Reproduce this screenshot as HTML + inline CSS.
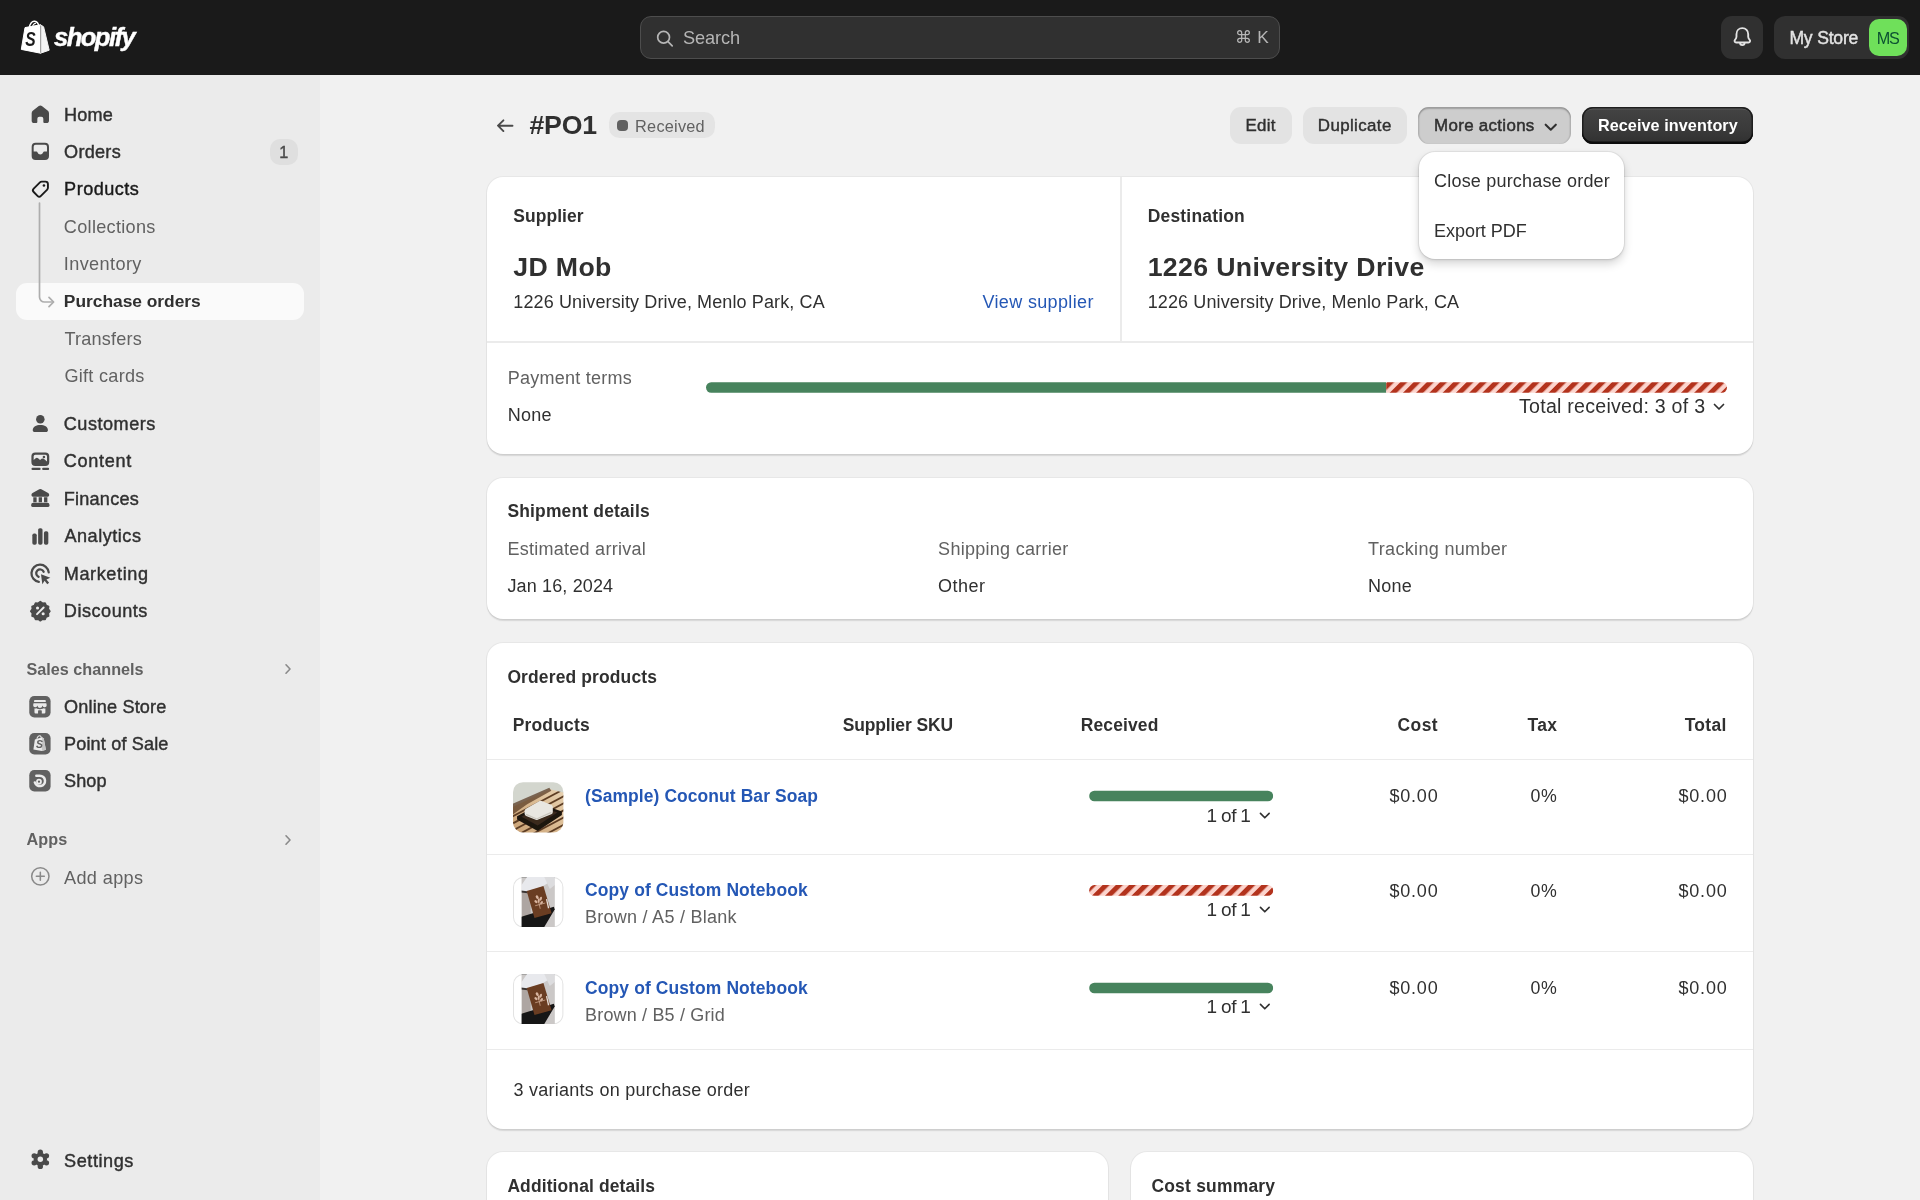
<!DOCTYPE html>
<html lang="en">
<head>
<meta charset="utf-8">
<title>Purchase order #PO1</title>
<style>
*{box-sizing:border-box;margin:0;padding:0}
html,body{width:1920px;height:1200px;overflow:hidden}
body{font-family:"Liberation Sans",Arial,sans-serif;background:#f1f1f1;color:#303030;font-size:18px;position:relative}
#wrap{position:absolute;left:0;top:0;width:1920px;height:1200px;overflow:hidden;will-change:transform;background:#f1f1f1}
.abs{position:absolute}
.t{position:absolute;white-space:nowrap;line-height:1}
.md{-webkit-text-stroke:.42px currentColor}
.b{font-weight:700}
.sub{color:#616161}
.lk{color:#2457b5}
#top{position:absolute;z-index:5;left:0;top:0;width:1920px;height:74.5px;background:#1a1a1a}
#side{position:absolute;left:0;top:0;width:320px;height:1200px;background:#ebebeb}
.card{position:absolute;background:#fff;border-radius:16px;box-shadow:0 0 0 1px rgba(0,0,0,.04),0 1.6px 1.2px 0 rgba(0,0,0,.11)}
.hr{position:absolute;background:#ebebeb}
.bar{position:absolute;height:9.9px;border-radius:6px}
.g{background:#47835d}
.rs{background:repeating-linear-gradient(135deg,#b3331d 0 5.05px,#fcd4cd 5.05px 9.385px)}
</style>
</head>
<body>
<div id="wrap">
<div id="top">
<svg class="abs" style="left:20px;top:20px" width="31" height="35" viewBox="0 0 31 35"><path d="M5 7.6 L20.5 4.8 L20.5 33.2 L1.3 29.4 Z" fill="#fff" stroke="#fff" stroke-width="1" stroke-linejoin="round"/><path d="M20.5 4.8 L23.6 6.8 L29.2 30.2 L20.5 33.2 Z" fill="#f4f4f4" stroke="#f4f4f4" stroke-width="1" stroke-linejoin="round"/><path d="M20.7 5.5 V32.8" stroke="#8f8f8f" stroke-width="1"/><path d="M9.3 8 C9.6 4 12 .9 14.6 1.3 C17.2 1.7 18.6 4.2 18.8 6.5" fill="none" stroke="#fff" stroke-width="1.4"/><path d="M12.3 7.5 C12.9 4.7 14.6 2.9 16 3.5" fill="none" stroke="#fff" stroke-width="1.1"/><text transform="translate(5.2 26.2) scale(.8 1)" font-family="Liberation Sans, Arial, sans-serif" font-weight="700" font-style="italic" font-size="19.5" fill="#1a1a1a">S</text></svg>
<div class="t b" style="left:54px;top:25.2px;font-size:25.6px;font-style:italic;color:#fff;letter-spacing:-1.55px;-webkit-text-stroke:.45px #fff">shopify</div>
<div class="abs" style="left:640px;top:16px;width:640px;height:42.7px;background:#303030;border:1px solid #4d4d4d;border-radius:11px"></div>
<svg class="abs" style="left:654px;top:27.5px" width="22" height="22" viewBox="0 0 22 22" fill="none" stroke="#b5b5b5" stroke-width="1.7" stroke-linecap="round"><circle cx="9.6" cy="9.3" r="5.9"/><path d="M14 13.7 L18.2 17.9"/></svg>
<div class="t" style="left:683.1px;top:28.92px;font-size:18.2px;letter-spacing:-.13px;color:#b5b5b5">Search</div>
<div class="t" style="left:1235.4px;top:29.36px;font-size:17.3px;color:#b5b5b5">⌘ K</div>
<div class="abs" style="left:1721px;top:16.2px;width:42px;height:42.5px;background:#303030;border-radius:11px"></div>
<svg class="abs" style="left:1728.7px;top:24.2px" width="26.67" height="26.67" viewBox="0 0 20 20" fill="none" stroke="#e3e3e3" stroke-width="1.4" stroke-linejoin="round"><path d="M10 3.1c-2.6 0-4.4 2-4.4 4.5v1.9c0 .9-.5 1.7-1.1 2.4-.7.8-.2 2 .9 2h9.2c1.1 0 1.6-1.2.9-2-.6-.7-1.1-1.5-1.1-2.4v-1.9c0-2.5-1.8-4.5-4.4-4.5Z"/><path d="M8.3 14.1a1.7 1.7 0 0 0 3.4 0"/></svg>
<div class="abs" style="left:1774.4px;top:16.2px;width:134.4px;height:42.5px;background:#303030;border-radius:11px"></div>
<div class="t md" style="left:1789.4px;top:29.71px;font-size:17.6px;letter-spacing:-.2px;color:#e3e3e3">My Store</div>
<div class="abs" style="left:1869px;top:18.7px;width:38px;height:37.5px;background:#6fe05a;border-radius:10px"></div>
<div class="t" style="left:1876.7px;top:30.09px;font-size:16.2px;letter-spacing:-1.2px;color:#0c5132">MS</div>
</div>
<div id="side">
<div class="abs" style="left:16px;top:283px;width:288px;height:37.3px;background:#fafafa;border-radius:11px"></div>
<svg class="abs" style="left:30px;top:200px" width="30" height="112" viewBox="0 0 30 112" fill="none" stroke="#adadad" stroke-width="1.7" stroke-linecap="round" stroke-linejoin="round"><path d="M9.5 3 V97 a5 5 0 0 0 5 5 H23.3"/><path d="M19 97.3 l4.6 4.7 -4.6 4.7"/></svg>
<svg class="abs" style="left:26.67px;top:100.66px" width="26.67" height="26.67" viewBox="0 0 20 20" fill="#4a4a4a"><path d="M10 3.3c.42 0 .83.14 1.16.41l4.5 3.65c.53.43.84 1.08.84 1.76v5.63c0 .97-.78 1.75-1.75 1.75h-1.75a.75.75 0 0 1-.75-.75v-2.5a1.5 1.5 0 0 0-1.5-1.5h-1.5a1.5 1.5 0 0 0-1.5 1.5v2.5a.75.75 0 0 1-.75.75h-1.75c-.97 0-1.75-.78-1.75-1.75v-5.63c0-.68.31-1.33.84-1.76l4.5-3.65c.33-.27.74-.41 1.16-.41Z"/></svg>
<div class="t md" style="left:64.1px;top:106.07px;font-size:18.1px;letter-spacing:.17px;color:#303030">Home</div>
<svg class="abs" style="left:26.67px;top:138.06px" width="26.67" height="26.67" viewBox="0 0 20 20" fill="#4a4a4a"><path fill-rule="evenodd" d="M6.5 3.5h7a3 3 0 0 1 3 3v7a3 3 0 0 1-3 3h-7a3 3 0 0 1-3-3v-7a3 3 0 0 1 3-3Zm-1.5 3v3.7h2.05c.4 0 .74.26.87.64a2.2 2.2 0 0 0 4.16 0c.13-.38.47-.64.87-.64h2.05v-3.7a1.5 1.5 0 0 0-1.5-1.5h-7a1.5 1.5 0 0 0-1.5 1.5Z"/></svg>
<div class="t md" style="left:64.1px;top:143.47px;font-size:18.1px;letter-spacing:.26px;color:#303030">Orders</div>
<div class="abs" style="left:270px;top:138.7px;width:28.3px;height:26.3px;background:#dfdfdf;border-radius:10px"></div>
<div class="t md" style="left:279.2px;top:144.49px;font-size:16.2px;color:#4a4a4a">1</div>
<svg class="abs" style="left:26.67px;top:175.47px" width="26.67" height="26.67" viewBox="0 0 20 20" fill="#4a4a4a"><g transform="translate(.75 1.5) scale(.92)"><path d="M11.15 3.75h3.1a2 2 0 0 1 2 2v3.1a2 2 0 0 1-.59 1.41l-5.1 5.1a2 2 0 0 1-2.82 0l-3.1-3.1a2 2 0 0 1 0-2.82l5.1-5.1a2 2 0 0 1 1.41-.59Z" fill="none" stroke="#1a1a1a" stroke-width="1.55" stroke-linejoin="round"/><circle cx="13" cy="7" r="1.05" fill="#1a1a1a"/></g></svg>
<div class="t md" style="left:64.1px;top:180.27px;font-size:18.1px;letter-spacing:.48px;color:#1a1a1a">Products</div>
<div class="t" style="left:63.8px;top:218.27px;font-size:18.1px;letter-spacing:.31px;color:#616161">Collections</div>
<div class="t" style="left:63.8px;top:254.77px;font-size:18.1px;letter-spacing:.39px;color:#616161">Inventory</div>
<div class="t b" style="left:63.8px;top:293.31px;font-size:17.4px;letter-spacing:-.02px;color:#303030">Purchase orders</div>
<div class="t" style="left:64.4px;top:330.27px;font-size:18.1px;letter-spacing:.2px;color:#616161">Transfers</div>
<div class="t" style="left:64.4px;top:366.77px;font-size:18.1px;letter-spacing:.28px;color:#616161">Gift cards</div>
<svg class="abs" style="left:26.67px;top:409.97px" width="26.67" height="26.67" viewBox="0 0 20 20" fill="#4a4a4a"><circle cx="10" cy="6.9" r="3.2"/><path d="M4.3 15.1c0-2.5 2.6-3.9 5.7-3.9s5.7 1.4 5.7 3.9c0 .8-.65 1.4-1.45 1.4h-8.5c-.8 0-1.45-.6-1.45-1.4Z"/></svg>
<div class="t md" style="left:63.8px;top:415.37px;font-size:18.1px;letter-spacing:.51px;color:#303030">Customers</div>
<svg class="abs" style="left:26.67px;top:447.37px" width="26.67" height="26.67" viewBox="0 0 20 20" fill="#4a4a4a"><g transform="translate(0 .9)"><path fill-rule="evenodd" d="M6.2 3.2h7.6a2.9 2.9 0 0 1 2.9 2.9v4.3a2.9 2.9 0 0 1-2.9 2.9h-7.6a2.9 2.9 0 0 1-2.9-2.9v-4.3a2.9 2.9 0 0 1 2.9-2.9Zm0 1.7a1.2 1.2 0 0 0-1.2 1.2v2.7l1.5-1.3a1.4 1.4 0 0 1 1.8 0l1.5 1.3 1.1-.8a1.4 1.4 0 0 1 1.7 0l2.4 1.9v-3.8a1.2 1.2 0 0 0-1.2-1.2h-7.6Zm6.5 2.7a.95.95 0 1 0 0-1.9.95.95 0 0 0 0 1.9Z"/><path d="M4.2 14.7h5.2a.85.85 0 0 1 0 1.7h-5.2a.85.85 0 0 1 0-1.7Zm8 0h3.6a.85.85 0 0 1 0 1.7h-3.6a.85.85 0 0 1 0-1.7Z"/></g></svg>
<div class="t md" style="left:63.8px;top:452.17px;font-size:18.1px;letter-spacing:.7px;color:#303030">Content</div>
<svg class="abs" style="left:26.67px;top:484.67px" width="26.67" height="26.67" viewBox="0 0 20 20" fill="#4a4a4a"><g transform="translate(.4 .3) scale(.96)"><path d="M9.2 3.1a1.7 1.7 0 0 1 1.6 0l5.3 2.8c.5.25.8.75.8 1.3v.5c0 .6-.5 1.1-1.1 1.1h-11.6c-.6 0-1.1-.5-1.1-1.1v-.5c0-.55.3-1.05.8-1.3l5.3-2.8Z"/><path d="M4.5 9.3h2.6v3.9h-2.6zM8.7 9.3h2.6v3.9h-2.6zM12.9 9.3h2.6v3.9h-2.6z"/><path d="M4.6 13.5h10.8a1.8 1.8 0 0 1 1.8 1.8v.4a1.1 1.1 0 0 1-1.1 1.1h-12.2a1.1 1.1 0 0 1-1.1-1.1v-.4a1.8 1.8 0 0 1 1.8-1.8Z"/></g></svg>
<div class="t md" style="left:63.8px;top:490.07px;font-size:18.1px;letter-spacing:.22px;color:#303030">Finances</div>
<svg class="abs" style="left:26.67px;top:521.96px" width="26.67" height="26.67" viewBox="0 0 20 20" fill="#4a4a4a"><g transform="translate(0 .7)"><rect x="4" y="8" width="3.3" height="8.3" rx="1.3"/><rect x="8.35" y="3.9" width="3.3" height="12.4" rx="1.3"/><rect x="12.7" y="6.2" width="3.3" height="10.1" rx="1.3"/></g></svg>
<div class="t md" style="left:64.4px;top:527.37px;font-size:18.1px;letter-spacing:.52px;color:#303030">Analytics</div>
<svg class="abs" style="left:26.67px;top:559.37px" width="26.67" height="26.67" viewBox="0 0 20 20" fill="#4a4a4a"><g transform="translate(.2 1.3)"><g fill="none" stroke="#4a4a4a" stroke-width="1.7" stroke-linecap="round"><path d="M16.1 8.7a6.5 6.5 0 1 0-7.4 7.2"/><path d="M12.3 8.3a2.9 2.9 0 1 0-3.8 3.8"/></g><path d="M10.3 10.1l7 2.6-2.9 1.3 2 2.5-1.4 1.1-2-2.5-1.7 2.5Z"/></g></svg>
<div class="t md" style="left:63.8px;top:564.77px;font-size:18.1px;letter-spacing:.59px;color:#303030">Marketing</div>
<svg class="abs" style="left:26.67px;top:596.66px" width="26.67" height="26.67" viewBox="0 0 20 20" fill="#4a4a4a"><g transform="translate(.8 1.2) scale(.92)"><path d="M10 2.5l1.75 1.3 2.15-.25.85 2 2 .85-.25 2.15 1.3 1.75-1.3 1.75.25 2.15-2 .85-.85 2-2.15-.25-1.75 1.3-1.75-1.3-2.15.25-.85-2-2-.85.25-2.15-1.3-1.75 1.3-1.75-.25-2.15 2-.85.85-2 2.15.25Z" stroke="#4a4a4a" stroke-width="1.3" stroke-linejoin="round"/><circle cx="7.7" cy="7.7" r="1.25" fill="#ebebeb"/><circle cx="12.3" cy="12.3" r="1.25" fill="#ebebeb"/><path d="M7.3 12.7l5.4-5.4" stroke="#ebebeb" stroke-width="1.6" stroke-linecap="round"/></g></svg>
<div class="t md" style="left:63.8px;top:602.07px;font-size:18.1px;letter-spacing:.52px;color:#303030">Discounts</div>
<div class="t b" style="left:26.4px;top:660.99px;font-size:16.2px;letter-spacing:.02px;color:#616161">Sales channels</div>
<svg class="abs" style="left:281px;top:661px" width="14" height="16" viewBox="0 0 14 16" fill="none" stroke="#8a8a8a" stroke-width="1.6" stroke-linecap="round" stroke-linejoin="round"><path d="M5 3.8l4 4.2-4 4.2"/></svg>
<svg class="abs" style="left:26.67px;top:692.66px" width="26.67" height="26.67" viewBox="0 0 20 20" fill="#4a4a4a"><g transform="translate(-.3 .3)"><rect x="2" y="2" width="16" height="16" rx="3.8" fill="#616161"/><g fill="#ebebeb"><path d="M6.2 5h7.6a.6.6 0 0 1 .6.6v.9h-8.8v-.9a.6.6 0 0 1 .6-.6Z"/><path d="M5.2 7.3h9.6l.3 1.5a1.65 1.65 0 0 1-3.25.3 1.85 1.85 0 0 1-3.7 0 1.65 1.65 0 0 1-3.25-.3Z"/><path fill-rule="evenodd" d="M5.9 11.3c.5.15 1.05.1 1.5-.1.4.35 1 .55 1.6.45.35.15.7.2 1 .2s.65-.05 1-.2c.6.1 1.2-.1 1.6-.45.45.2 1 .25 1.5.1v2.9a.9.9 0 0 1-.9.9h-6.4a.9.9 0 0 1-.9-.9Zm2.7 1.9v1.9h2.8v-1.9a.5.5 0 0 0-.5-.5h-1.8a.5.5 0 0 0-.5.5Z"/></g></g></svg>
<div class="t md" style="left:64px;top:698.07px;font-size:18.1px;letter-spacing:.16px;color:#303030">Online Store</div>
<svg class="abs" style="left:26.67px;top:729.96px" width="26.67" height="26.67" viewBox="0 0 20 20" fill="#4a4a4a"><g transform="translate(-.3 .3)"><rect x="2" y="2" width="16" height="16" rx="3.8" fill="#616161"/><path d="M6.2 6.9l5.6-1.7 1.1.9 1.6 8.5-3.1.9-6.3-1.1Z" fill="#ebebeb"/><path d="M11.8 5.2l1.1.9 1.6 8.5-3.1.9Z" fill="#c4c4c4"/><path d="M7.7 6.3c.3-1.7 1.5-2.5 2.4-2.2.7.25.95 1.1 1 1.9" fill="none" stroke="#ebebeb" stroke-width=".8"/><text x="7.05" y="13.4" font-family="Liberation Sans, Arial, sans-serif" font-weight="700" font-style="italic" font-size="7.8" fill="#616161">S</text></g></svg>
<div class="t md" style="left:64px;top:735.37px;font-size:18.1px;letter-spacing:.15px;color:#303030">Point of Sale</div>
<svg class="abs" style="left:26.67px;top:766.96px" width="26.67" height="26.67" viewBox="0 0 20 20" fill="#4a4a4a"><g transform="translate(-.3 .3)"><rect x="2" y="2" width="16" height="16" rx="3.8" fill="#616161"/><path d="M7.3 6.2h2.6a3.9 3.9 0 1 1-3.7 5.1" fill="none" stroke="#ebebeb" stroke-width="1.9" stroke-linecap="round"/><circle cx="9.3" cy="10.7" r="1.5" fill="none" stroke="#ebebeb" stroke-width="1.3"/></g></svg>
<div class="t md" style="left:64px;top:772.37px;font-size:18.1px;letter-spacing:.11px;color:#303030">Shop</div>
<div class="t b" style="left:26.4px;top:831.29px;font-size:16.2px;letter-spacing:.17px;color:#616161">Apps</div>
<svg class="abs" style="left:281px;top:831.5px" width="14" height="16" viewBox="0 0 14 16" fill="none" stroke="#8a8a8a" stroke-width="1.6" stroke-linecap="round" stroke-linejoin="round"><path d="M5 3.8l4 4.2-4 4.2"/></svg>
<svg class="abs" style="left:26.67px;top:863.46px" width="26.67" height="26.67" viewBox="0 0 20 20" fill="#4a4a4a"><g fill="none" stroke="#8a8a8a" stroke-width="1.15" stroke-linecap="round"><circle cx="10" cy="10" r="6.5"/><path d="M10 7v6M7 10h6"/></g></svg>
<div class="t" style="left:64px;top:868.77px;font-size:18.1px;letter-spacing:.37px;color:#616161">Add apps</div>
<svg class="abs" style="left:26.67px;top:1146.37px" width="26.67" height="26.67" viewBox="0 0 20 20" fill="#4a4a4a"><circle cx="10" cy="10" r="5"/><circle cx="10" cy="4.7" r="2"/><circle cx="10" cy="15.3" r="2"/><circle cx="5.4" cy="7.35" r="2"/><circle cx="14.6" cy="7.35" r="2"/><circle cx="5.4" cy="12.65" r="2"/><circle cx="14.6" cy="12.65" r="2"/><circle cx="10" cy="10" r="2.05" fill="#ebebeb"/></svg>
<div class="t md" style="left:64.1px;top:1151.77px;font-size:18.1px;letter-spacing:.56px;color:#303030">Settings</div>
</div>
<div id="main">
<svg class="abs" style="left:494px;top:114.5px" width="22" height="22" viewBox="0 0 22 22" fill="none" stroke="#4a4a4a" stroke-width="1.9" stroke-linecap="round" stroke-linejoin="round"><path d="M18.5 10.7 H4.2 M9.4 5.3 L4 10.7 L9.4 16.1"/></svg>
<div class="t b" style="left:529.4px;top:111.89px;font-size:26.67px;letter-spacing:-.17px;color:#303030">#PO1</div>
<div class="abs" style="left:609px;top:112px;width:106px;height:26.4px;background:#e4e4e4;border-radius:10.5px"></div>
<div class="abs" style="left:617px;top:120px;width:11px;height:11px;background:#616161;border-radius:4px"></div>
<div class="t" style="left:635.1px;top:117.65px;font-size:16.3px;letter-spacing:.24px;color:#616161">Received</div>
<div class="abs" style="left:1229.6px;top:106.7px;width:62.4px;height:37.1px;background:#e3e3e3;border-radius:11px"></div>
<div class="t md" style="left:1245.4px;top:117.85px;font-size:16.9px;letter-spacing:.29px;color:#303030">Edit</div>
<div class="abs" style="left:1302.7px;top:106.7px;width:104.6px;height:37.1px;background:#e3e3e3;border-radius:11px"></div>
<div class="t md" style="left:1317.8px;top:117.85px;font-size:16.9px;letter-spacing:.39px;color:#303030">Duplicate</div>
<div class="abs" style="left:1418px;top:106.7px;width:153px;height:37.1px;background:#cdcdcd;border-radius:11px;box-shadow:inset 0 2px 1.5px rgba(0,0,0,.22),inset 1.5px 0 1px rgba(0,0,0,.1),inset -1.5px 0 1px rgba(0,0,0,.1)"></div>
<div class="t md" style="left:1434.1px;top:118.35px;font-size:16.9px;letter-spacing:.32px;color:#303030;-webkit-text-stroke:.5px currentColor">More actions</div>
<svg class="abs" style="left:1543.5px;top:122.7px" width="13.5" height="9" viewBox="0 0 12 8" fill="none" stroke="#303030" stroke-width="1.8" stroke-linecap="round" stroke-linejoin="round"><path d="M1.5 1.5 L6 6 L10.5 1.5"/></svg>
<div class="abs" style="left:1582px;top:106.7px;width:171.1px;height:37.1px;background:linear-gradient(180deg,#444 0%,#3a3a3a 60%,#303030 100%);border-radius:11px;box-shadow:inset 0 -2.5px 0 0 #0c0c0c,inset 0 0 0 1.5px #1f1f1f,inset 0 2.5px 0 0 rgba(255,255,255,.13)"></div>
<div class="t b" style="left:1597.9px;top:116.79px;font-size:16.2px;letter-spacing:.08px;color:#fff">Receive inventory</div>
<div class="card" style="left:487.2px;top:177px;width:1265.6px;height:276.7px"></div>
<div class="hr" style="left:1120.2px;top:177px;width:1.4px;height:164.5px"></div>
<div class="hr" style="left:487.2px;top:341.3px;width:1265.6px;height:1.4px"></div>
<div class="t b" style="left:513.3px;top:208.08px;font-size:17.45px;letter-spacing:.07px">Supplier</div>
<div class="t b" style="left:513.3px;top:253.59px;font-size:26.67px;letter-spacing:.36px">JD Mob</div>
<div class="t" style="left:513.3px;top:293.12px;font-size:18px;letter-spacing:.12px">1226 University Drive, Menlo Park, CA</div>
<div class="t" style="left:982.4px;top:292.82px;font-size:18px;letter-spacing:.36px;color:#2457b5">View supplier</div>
<div class="t b" style="left:1147.7px;top:208.08px;font-size:17.45px;letter-spacing:.21px">Destination</div>
<div class="t b" style="left:1147.7px;top:253.59px;font-size:26.67px;letter-spacing:.35px">1226 University Drive</div>
<div class="t" style="left:1147.7px;top:293.12px;font-size:18px;letter-spacing:.12px">1226 University Drive, Menlo Park, CA</div>
<div class="t" style="left:507.8px;top:368.72px;font-size:18px;letter-spacing:.24px;color:#616161">Payment terms</div>
<div class="t" style="left:507.8px;top:406.02px;font-size:18px;letter-spacing:.19px">None</div>
<svg class="abs" style="left:705px;top:381px" width="1023" height="13" viewBox="0 0 1023 13"><defs><clipPath id="bc1"><rect x="1" y="1.3" width="1021" height="10.35" rx="5.17"/></clipPath><pattern id="bp1" width="9.36" height="8" patternUnits="userSpaceOnUse" patternTransform="translate(8.17 0) rotate(45)"><rect width="9.36" height="8" fill="#fcd4cd"/><rect width="5" height="8" fill="#b3331d"/></pattern></defs><g clip-path="url(#bc1)"><rect x="1" y="0" width="680.25" height="13" fill="#47835d"/><rect x="681.25" y="0" width="340.75" height="13" fill="url(#bp1)"/></g></svg>
<div class="t" style="left:1519px;top:397.34px;font-size:19.6px;letter-spacing:.25px">Total received: 3 of 3</div>
<svg class="abs" style="left:1712.6px;top:403.1px" width="12" height="8" viewBox="0 0 12 8" fill="none" stroke="#303030" stroke-width="1.7" stroke-linecap="round" stroke-linejoin="round"><path d="M1.5 1.5 L6 6 L10.5 1.5"/></svg>
<div class="card" style="left:487.2px;top:478px;width:1265.6px;height:141.2px"></div>
<div class="t b" style="left:507.4px;top:502.98px;font-size:17.45px;letter-spacing:.18px">Shipment details</div>
<div class="t" style="left:507.4px;top:540.22px;font-size:18px;letter-spacing:.27px;color:#616161">Estimated arrival</div>
<div class="t" style="left:507.4px;top:577.42px;font-size:18px;letter-spacing:.15px">Jan 16, 2024</div>
<div class="t" style="left:938.1px;top:540.22px;font-size:18px;letter-spacing:.28px;color:#616161">Shipping carrier</div>
<div class="t" style="left:938.1px;top:577.42px;font-size:18px;letter-spacing:.5px">Other</div>
<div class="t" style="left:1368.1px;top:540.22px;font-size:18px;letter-spacing:.33px;color:#616161">Tracking number</div>
<div class="t" style="left:1368.1px;top:577.42px;font-size:18px;letter-spacing:.19px">None</div>
<div class="card" style="left:487.2px;top:643.3px;width:1265.6px;height:485.5px"></div>
<div class="t b" style="left:507.4px;top:669.18px;font-size:17.45px;letter-spacing:.15px">Ordered products</div>
<div class="t b" style="left:512.7px;top:717.18px;font-size:17.45px;letter-spacing:.2px">Products</div>
<div class="t b" style="left:842.7px;top:717.18px;font-size:17.45px;letter-spacing:-.1px">Supplier SKU</div>
<div class="t b" style="left:1080.7px;top:717.18px;font-size:17.45px;letter-spacing:.15px">Received</div>
<div class="t b" style="left:1397.4px;top:717.18px;font-size:17.45px;letter-spacing:.51px">Cost</div>
<div class="t b" style="left:1527.4px;top:717.18px;font-size:17.45px;letter-spacing:.46px">Tax</div>
<div class="t b" style="left:1684.7px;top:717.18px;font-size:17.45px;letter-spacing:.33px">Total</div>
<div class="hr" style="left:487.2px;top:758.6px;width:1265.6px;height:1.4px"></div>
<div class="hr" style="left:487.2px;top:853.6px;width:1265.6px;height:1.4px"></div>
<div class="hr" style="left:487.2px;top:951px;width:1265.6px;height:1.4px"></div>
<div class="hr" style="left:487.2px;top:1048.6px;width:1265.6px;height:1.4px"></div>
<svg class="abs" style="left:513.3px;top:782px" width="50.4" height="50.7" viewBox="0 0 50 50"><defs><clipPath id="c1"><rect width="50" height="50" rx="10"/></clipPath><filter id="bl" x="-10%" y="-10%" width="120%" height="120%"><feGaussianBlur stdDeviation=".55"/></filter><linearGradient id="wd" x1="0" y1="1" x2="1" y2="0"><stop offset="0" stop-color="#c89f72"/><stop offset=".55" stop-color="#dcbd95"/><stop offset="1" stop-color="#ead9bd"/></linearGradient></defs><g clip-path="url(#c1)"><g filter="url(#bl)"><rect x="-3" y="-3" width="56" height="56" fill="url(#wd)"/><g stroke="#5d3d24" stroke-width="1.8"><path d="M-4 36 L54 5"/><path d="M-4 43 L54 12"/><path d="M-4 50 L54 19"/><path d="M-4 57 L54 26"/><path d="M-4 64 L54 33"/><path d="M10 64 L60 37"/></g><path d="M-3 -3 H53 V11 L37 7 L-3 26 Z" fill="#d3d6ce"/><path d="M-3 22.5 L36 5.5 L38 8.5 L14 22 L-3 34 Z" fill="#5b3d27" opacity=".75"/><path d="M4 33.8 L27 21.5 L48.5 29 L48.5 32.5 L24.5 48.5 L4 37 Z" fill="#1d1511"/><path d="M8.5 34.3 L27 24.5 L44 30 L24.5 43 Z" fill="#3a2a1e"/><path d="M14 28.5 L27.5 21 L37 24.7 L37 29.5 L23.5 35 L14 31.2 Z" fill="#e9e7e1" stroke="#e9e7e1" stroke-width="5" stroke-linejoin="round"/><path d="M13 32 L23.5 36.5 L38 30" fill="none" stroke="#c9c5bc" stroke-width="1.2"/></g></g></svg>
<svg class="abs" style="left:513.3px;top:876.8px" width="50.4" height="50.4" viewBox="0 0 50 50"><defs><clipPath id="n876"><rect x="8.5" width="33" height="50"/></clipPath></defs><rect x=".5" y=".5" width="49" height="49" rx="9.5" fill="#fff" stroke="#e3e3e3"/><g clip-path="url(#n876)"><g filter="url(#bl)"><rect x="5" y="-3" width="40" height="56" fill="#cbc8c7"/><rect x="5" y="-3" width="40" height="3.8" fill="#9d9b9b"/><rect x="8.5" y="14" width="9" height="26" fill="#aea6a2"/><path d="M8.5 8 L14 0 H33 L36.5 5 L29 9.5 L13 15 L8.5 15 Z" fill="#e8e9ed"/><path d="M31 0 H41.5 V8 L36.5 12 Z" fill="#dcdcde"/><path d="M5 40.5 L40.5 29.5 L41.5 32 L29 53 H5 Z" fill="#161413"/><path d="M8 13.5 L14 14.2 L14.5 16 L8 15.5 Z" fill="#3a3533"/><path d="M13.6 13.8 L30.2 9 L38.3 36 L21.3 40.8 Z" fill="#6b3d22"/><g fill="#d8b5a0"><ellipse cx="24" cy="20" rx="1.3" ry="2" transform="rotate(-30 24 20)"/><ellipse cx="27.5" cy="21.5" rx="1.2" ry="2" transform="rotate(20 27.5 21.5)"/><ellipse cx="22.8" cy="24.5" rx="1.2" ry="1.8" transform="rotate(-50 22.8 24.5)"/><ellipse cx="28.3" cy="25.5" rx="1.1" ry="1.8" transform="rotate(40 28.3 25.5)"/><ellipse cx="25.5" cy="23.5" rx="1" ry="2.2"/></g><path d="M25.6 25 L27 31.5 M22 28.5 L32 25.8" stroke="#c9a48c" stroke-width=".8" fill="none"/><path d="M33.3 22 L35.3 31" stroke="#e6ddd6" stroke-width="1.3"/></g></g></svg>
<svg class="abs" style="left:513.3px;top:974px" width="50.4" height="50.4" viewBox="0 0 50 50"><defs><clipPath id="n974"><rect x="8.5" width="33" height="50"/></clipPath></defs><rect x=".5" y=".5" width="49" height="49" rx="9.5" fill="#fff" stroke="#e3e3e3"/><g clip-path="url(#n974)"><g filter="url(#bl)"><rect x="5" y="-3" width="40" height="56" fill="#cbc8c7"/><rect x="5" y="-3" width="40" height="3.8" fill="#9d9b9b"/><rect x="8.5" y="14" width="9" height="26" fill="#aea6a2"/><path d="M8.5 8 L14 0 H33 L36.5 5 L29 9.5 L13 15 L8.5 15 Z" fill="#e8e9ed"/><path d="M31 0 H41.5 V8 L36.5 12 Z" fill="#dcdcde"/><path d="M5 40.5 L40.5 29.5 L41.5 32 L29 53 H5 Z" fill="#161413"/><path d="M8 13.5 L14 14.2 L14.5 16 L8 15.5 Z" fill="#3a3533"/><path d="M13.6 13.8 L30.2 9 L38.3 36 L21.3 40.8 Z" fill="#6b3d22"/><g fill="#d8b5a0"><ellipse cx="24" cy="20" rx="1.3" ry="2" transform="rotate(-30 24 20)"/><ellipse cx="27.5" cy="21.5" rx="1.2" ry="2" transform="rotate(20 27.5 21.5)"/><ellipse cx="22.8" cy="24.5" rx="1.2" ry="1.8" transform="rotate(-50 22.8 24.5)"/><ellipse cx="28.3" cy="25.5" rx="1.1" ry="1.8" transform="rotate(40 28.3 25.5)"/><ellipse cx="25.5" cy="23.5" rx="1" ry="2.2"/></g><path d="M25.6 25 L27 31.5 M22 28.5 L32 25.8" stroke="#c9a48c" stroke-width=".8" fill="none"/><path d="M33.3 22 L35.3 31" stroke="#e6ddd6" stroke-width="1.3"/></g></g></svg>
<div class="t b" style="left:585.1px;top:787.58px;font-size:17.45px;letter-spacing:.09px;color:#2457b5">(Sample) Coconut Bar Soap</div>
<svg class="abs" style="left:1088px;top:789px" width="187" height="14" viewBox="0 0 187 14"><defs><clipPath id="bc2"><rect x="1.1" y="1.7" width="184.1" height="10.6" rx="5.3"/></clipPath></defs><g clip-path="url(#bc2)"><rect x="1.1" y="0" width="184.1" height="14" fill="#47835d"/></g></svg>
<div class="t" style="left:1206.6px;top:805.53px;font-size:19px;word-spacing:-.9px;letter-spacing:-.3px">1 of 1</div>
<svg class="abs" style="left:1259.4px;top:811.73px" width="11.6" height="7.73" viewBox="0 0 12 8" fill="none" stroke="#303030" stroke-width="1.7" stroke-linecap="round" stroke-linejoin="round"><path d="M1.5 1.5 L6 6 L10.5 1.5"/></svg>
<div class="t" style="left:1389.4px;top:786.92px;font-size:18px;letter-spacing:.81px">$0.00</div>
<div class="t" style="left:1530.6px;top:787.71px;font-size:17.8px;letter-spacing:.57px">0%</div>
<div class="t" style="left:1678.4px;top:786.92px;font-size:18px;letter-spacing:.84px">$0.00</div>
<div class="t b" style="left:585.1px;top:882.38px;font-size:17.45px;letter-spacing:.12px;color:#2457b5">Copy of Custom Notebook</div>
<div class="t" style="left:585.1px;top:908.22px;font-size:18px;letter-spacing:.25px;color:#616161">Brown / A5 / Blank</div>
<svg class="abs" style="left:1088px;top:884px" width="187" height="13" viewBox="0 0 187 13"><defs><clipPath id="bc3"><rect x="1.1" y="1.1" width="184.1" height="10.6" rx="5.3"/></clipPath><pattern id="bp3" width="9.36" height="8" patternUnits="userSpaceOnUse" patternTransform="translate(2.36 0) rotate(45)"><rect width="9.36" height="8" fill="#fcd4cd"/><rect width="5" height="8" fill="#b3331d"/></pattern></defs><g clip-path="url(#bc3)"><rect x="1.1" y="0" width="184.1" height="13" fill="url(#bp3)"/></g></svg>
<div class="t" style="left:1206.6px;top:900.23px;font-size:19px;word-spacing:-.9px;letter-spacing:-.3px">1 of 1</div>
<svg class="abs" style="left:1259.4px;top:906.43px" width="11.6" height="7.73" viewBox="0 0 12 8" fill="none" stroke="#303030" stroke-width="1.7" stroke-linecap="round" stroke-linejoin="round"><path d="M1.5 1.5 L6 6 L10.5 1.5"/></svg>
<div class="t" style="left:1389.4px;top:881.72px;font-size:18px;letter-spacing:.81px">$0.00</div>
<div class="t" style="left:1530.6px;top:882.51px;font-size:17.8px;letter-spacing:.57px">0%</div>
<div class="t" style="left:1678.4px;top:881.72px;font-size:18px;letter-spacing:.84px">$0.00</div>
<div class="t b" style="left:585.1px;top:979.68px;font-size:17.45px;letter-spacing:.12px;color:#2457b5">Copy of Custom Notebook</div>
<div class="t" style="left:585.1px;top:1005.52px;font-size:18px;letter-spacing:.16px;color:#616161">Brown / B5 / Grid</div>
<svg class="abs" style="left:1088px;top:981px" width="187" height="14" viewBox="0 0 187 14"><defs><clipPath id="bc4"><rect x="1.1" y="1.7" width="184.1" height="10.6" rx="5.3"/></clipPath></defs><g clip-path="url(#bc4)"><rect x="1.1" y="0" width="184.1" height="14" fill="#47835d"/></g></svg>
<div class="t" style="left:1206.6px;top:997.23px;font-size:19px;word-spacing:-.9px;letter-spacing:-.3px">1 of 1</div>
<svg class="abs" style="left:1259.4px;top:1003.43px" width="11.6" height="7.73" viewBox="0 0 12 8" fill="none" stroke="#303030" stroke-width="1.7" stroke-linecap="round" stroke-linejoin="round"><path d="M1.5 1.5 L6 6 L10.5 1.5"/></svg>
<div class="t" style="left:1389.4px;top:979.02px;font-size:18px;letter-spacing:.81px">$0.00</div>
<div class="t" style="left:1530.6px;top:979.81px;font-size:17.8px;letter-spacing:.57px">0%</div>
<div class="t" style="left:1678.4px;top:979.02px;font-size:18px;letter-spacing:.84px">$0.00</div>
<div class="t" style="left:513.4px;top:1081.42px;font-size:18px;letter-spacing:.27px">3 variants on purchase order</div>
<div class="card" style="left:487.2px;top:1152.3px;width:620.8px;height:80px"></div>
<div class="t b" style="left:507.4px;top:1178.38px;font-size:17.45px;letter-spacing:.13px">Additional details</div>
<div class="card" style="left:1131.3px;top:1152.3px;width:621.5px;height:80px"></div>
<div class="t b" style="left:1151.4px;top:1178.38px;font-size:17.45px;letter-spacing:.23px">Cost summary</div>
<div class="abs" style="left:1419px;top:152.2px;width:204.6px;height:106.4px;background:#fff;border-radius:16px;box-shadow:0 0 0 1px rgba(0,0,0,.05),0 5px 10px rgba(0,0,0,.16),0 1px 3px rgba(0,0,0,.1);z-index:4"></div>
<div class="t" style="left:1434.1px;top:172.22px;font-size:18px;letter-spacing:.19px;color:#303030;z-index:4">Close purchase order</div>
<div class="t" style="left:1434.1px;top:221.62px;font-size:18px;letter-spacing:-.05px;color:#303030;z-index:4">Export PDF</div>
</div>
</div>
</body>
</html>
